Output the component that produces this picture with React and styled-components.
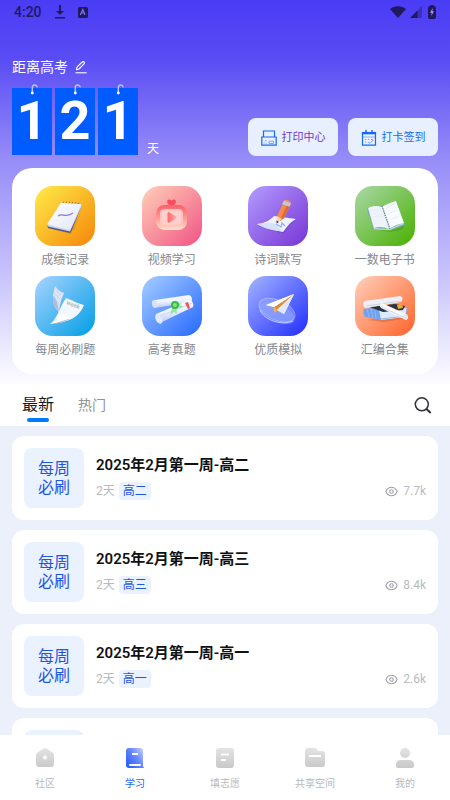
import React, { useState } from "react";
import styled, { createGlobalStyle } from "styled-components";

const GlobalStyle = createGlobalStyle`
  *, *::before, *::after { box-sizing: border-box; }
  body {
    margin: 0;
    font-family: Roboto, "Noto Sans CJK SC", sans-serif;
    background: #fff;
  }
  button { font: inherit; border: 0; padding: 0; background: none; cursor: pointer; }
  a { color: inherit; text-decoration: none; }
  h1, h2, p, ul { margin: 0; padding: 0; }
  ul { list-style: none; }
  svg { display: block; flex: none; }
`;

const Page = styled.div`
  display: flex;
  flex-direction: column;
  height: 100vh;
  overflow: hidden;
`;

const Hero = styled.header`
  flex: none;
  padding: 0 12px 10px;
  background: linear-gradient(#4a3cf4 0, #5a4df4 60px, #978df8 160px, #c6c0fb 270px, #f6f5ff 370px, #fcfcff 100%);
`;

const StatusBar = styled.div`
  display: flex;
  align-items: center;
  justify-content: space-between;
  height: 24px;
  margin-right: 2px;
  color: #21195f;
`;

const StatusGroup = styled.div`
  display: flex;
  align-items: center;
  gap: ${(p) => p.$gap}px;
  padding-left: 2px;
`;

const Clock = styled.time`
  font-size: 14px;
  font-weight: 500;
  line-height: 24px;
`;

const Heading = styled.div`
  display: flex;
  align-items: center;
  gap: 7px;
  padding-top: 32px;
  color: #fff;
`;

const HeroTitle = styled.h1`
  font-size: 14px;
  font-weight: 400;
  line-height: 22px;
`;

const IconButton = styled.button`
  display: flex;
  color: inherit;
`;

const CountRow = styled.div`
  display: flex;
  align-items: flex-end;
  justify-content: space-between;
  padding-top: 10px;
`;

const Countdown = styled.div`
  display: flex;
  align-items: flex-end;
  gap: 3px;
  padding-bottom: 1px;
  color: #fff;
`;

const Digit = styled.div`
  position: relative;
  width: 40px;
  height: 67px;
  background: #005cff;
  font-size: 54px;
  font-weight: 700;
  line-height: 66px;
  text-align: center;

  svg {
    position: absolute;
    top: -4px;
    left: 17px;
  }
`;

const Unit = styled.span`
  padding-left: 6px;
  font-size: 12px;
  line-height: 12px;
`;

const Actions = styled.div`
  display: flex;
  gap: 10px;
`;

const ActionButton = styled.button`
  display: flex;
  align-items: center;
  justify-content: center;
  gap: 5px;
  width: 90px;
  height: 38px;
  padding-top: 2px;
  border-radius: 8px;
  background: #e8f0ff;
  color: ${(p) => p.$color};
  font-size: 11px;
  line-height: 16px;
`;

const Shortcuts = styled.nav`
  display: grid;
  grid-template-columns: repeat(4, 1fr);
  row-gap: 5px;
  margin-top: 12px;
  padding: 18px 0 13px;
  border-radius: 20px;
  background: #fff;
`;

const Shortcut = styled.a`
  display: flex;
  flex-direction: column;
  align-items: center;
  gap: 3px;
  color: #85878e;
  font-size: 12px;
  line-height: 22px;
`;

const Tile = styled.span`
  width: 60px;
  height: 60px;
  border-radius: 18px;
  background: linear-gradient(135deg, ${(p) => p.$from}, ${(p) => p.$to});
`;

const TabBar = styled.div`
  display: flex;
  flex: none;
  align-items: center;
  justify-content: space-between;
  height: 42px;
  padding: 0 18px 0 22px;
`;

const Tabs = styled.div`
  display: flex;
  gap: 24px;
`;

const Tab = styled.button`
  position: relative;
  height: 40px;
  color: ${(p) => (p.$active ? "#18191c" : "#91939a")};
  font-size: ${(p) => (p.$active ? 16 : 14)}px;
  line-height: 40px;

  &::after {
    content: "";
    position: absolute;
    left: 50%;
    bottom: 3px;
    width: 22px;
    height: 4px;
    margin-left: -11px;
    border-radius: 2px;
    background: ${(p) => (p.$active ? "#007bff" : "transparent")};
  }
`;

const Feed = styled.main`
  flex: 1;
  min-height: 0;
  overflow-y: auto;
  scrollbar-width: none;
  padding: 10px 12px;
  background: #ebf0fa;
`;

const FeedList = styled.ul`
  display: flex;
  flex-direction: column;
  gap: 10px;
`;

const Card = styled.a`
  display: flex;
  gap: 12px;
  padding: 12px;
  border-radius: 12px;
  background: #fff;
`;

const Cover = styled.span`
  display: flex;
  flex: none;
  align-items: center;
  justify-content: center;
  width: 60px;
  height: 60px;
  border-radius: 8px;
  background: #ebf2ff;
  color: #1d55e5;
  font-size: 16px;
  line-height: 19px;
  text-align: center;
  white-space: pre-line;
`;

const CardBody = styled.div`
  flex: 1;
  min-width: 0;
  padding-top: 5px;
`;

const CardTitle = styled.h2`
  color: #101113;
  font-size: 15px;
  font-weight: 600;
  line-height: 24px;
`;

const Meta = styled.div`
  display: flex;
  align-items: center;
  gap: 4px;
  margin-top: 5px;
  color: #b9bac0;
  font-size: 12px;
  line-height: 18px;
`;

const Tag = styled.span`
  padding: 0 4px;
  border-radius: 4px;
  background: #ebf2ff;
  color: #1d55e5;
`;

const Views = styled.span`
  display: flex;
  align-items: center;
  gap: 5px;
  margin-left: auto;
`;

const BottomNav = styled.nav`
  display: grid;
  flex: none;
  grid-template-columns: repeat(5, 1fr);
  height: 65px;
  background: #fff;
`;

const NavItem = styled.a`
  display: flex;
  flex-direction: column;
  align-items: center;
  gap: 7px;
  padding-top: 12px;
  color: ${(p) => (p.$active ? "#2468f5" : "#b8b9bd")};
  font-size: 10px;
  line-height: 16px;
`;

const DownloadIcon = () => (
  <svg width="10" height="14" viewBox="0 0 10 14" fill="currentColor" aria-hidden="true">
    <path d="M4 0h2v6h3L5 10 1 6h3zM0 12h10v1.5H0z" />
  </svg>
);

const KeyboardIcon = () => (
  <svg width="10" height="11" viewBox="0 0 10 11" aria-hidden="true">
    <rect width="10" height="11" rx="1.5" fill="currentColor" />
    <path d="M2.3 8 4.8 2.5 7 8M3.2 6h3" fill="none" stroke="#8077e6" strokeWidth="1.1" />
  </svg>
);

const WifiIcon = () => (
  <svg width="16" height="12" viewBox="0 0 16 12" fill="currentColor" aria-hidden="true">
    <path d="M0 3C4.5-.8 11.5-.8 16 3L8 12z" />
  </svg>
);

const SignalIcon = () => (
  <svg width="12" height="12" viewBox="0 0 12 12" fill="currentColor" aria-hidden="true">
    <path d="M12 0v12H0z" opacity=".4" />
    <path d="M7.5 4.5V12H0z" />
  </svg>
);

const BatteryIcon = () => (
  <svg width="8" height="14" viewBox="0 0 8 14" aria-hidden="true">
    <path d="M2.3 1V0h3.4v1C7 1 8 1.7 8 3v9c0 1.2-.8 2-2 2H2c-1.2 0-2-.8-2-2V3c0-1.3 1-2 2.3-2" fill="currentColor" />
    <path d="M4.7 3 2 7.7h1.6L3.3 11 6 6.3H4.4z" fill="#9c94f0" />
  </svg>
);

const PencilIcon = () => (
  <svg width="12" height="13" viewBox="0 0 12 13" fill="none" stroke="currentColor" strokeWidth="1.1" strokeLinejoin="round" aria-hidden="true">
    <path d="m1.5 8.800.5-2.600L7.200 1c.6-.6 1.300-.5 1.800 0s.6 1.200 0 1.800L4 8z" />
    <path d="M.5 11.8h11.2" />
  </svg>
);

const HookIcon = () => (
  <svg width="10" height="11" viewBox="0 0 10 11" fill="none" stroke="#b9bff2" strokeWidth="1.5" strokeLinecap="round" aria-hidden="true">
    <path d="M3.3 8.500V4c0-2 .8-3 2.300-3 1.300 0 2 .7 2.500 1.800" />
    <circle cx="3.300" cy="9" r=".7" fill="#fff" stroke="#fff" />
  </svg>
);

const PrinterIcon = () => (
  <svg width="16" height="16" viewBox="0 0 16 16" fill="none" stroke="#1768f5" aria-hidden="true">
    <path d="M2.500 7V1h11v6" strokeWidth="1.2" />
    <path d="M.8 7h14.4v8.200H.8z" strokeWidth="1.2" />
    <path d="M4 10.500h1.500M8 13.500v-2.300h4.500v2.300z" stroke="#6c9ff7" strokeWidth=".9" />
    <path d="M2.500 13h3.500" stroke="#8fb6fa" strokeWidth=".8" />
  </svg>
);

const CalendarIcon = () => (
  <svg width="16" height="16" viewBox="0 0 16 16" fill="none" stroke="#1768f5" aria-hidden="true">
    <path d="M1.500 2.500h13v12.700h-13z" strokeWidth="1.2" />
    <path d="M1.500 3.300h13" strokeWidth="2" />
    <path d="M5 0v4M11 0v4" strokeWidth="1.5" />
    <path d="M2 7h12" stroke="#75a5f8" strokeWidth=".8" />
    <path d="M4 9.500h1.300M7 9.500h1.300M10 9.500h2M4 12h1.300M7 12l2 1.300 3.500-3.500" stroke="#6c9ff7" strokeWidth=".9" />
  </svg>
);

const SearchIcon = () => (
  <svg width="18" height="18" viewBox="0 0 18 18" fill="none" stroke="#303136" strokeWidth="1.5" aria-hidden="true">
    <circle cx="7.800" cy="8.300" r="6.500" />
    <path d="m12 12.500 4.700 4.500" strokeWidth="2" />
  </svg>
);

const EyeIcon = () => (
  <svg width="13" height="11" viewBox="0 0 14 12" fill="none" stroke="#9fa0a9" strokeWidth="1.2" aria-hidden="true">
    <path d="M.8 6C2 3.200 4.200 1.300 7 1.300S12 3.200 13.200 6C12 8.800 9.800 10.700 7 10.700S2 8.800.8 6Z" />
    <circle cx="7" cy="6" r="1.900" />
  </svg>
);

const Art = ({ children }) => (
  <svg width="60" height="60" viewBox="0 0 60 60" aria-hidden="true">{children}</svg>
);

const NotepadArt = () => (
  <Art>
    <defs>
      <linearGradient id="pad" x1="0" y1="0" x2="1" y2="1">
        <stop stopColor="#fff" /><stop offset="1" stopColor="#e1e7f7" />
      </linearGradient>
    </defs>
    <path d="m13 42 23 6 12-27-9 23z" fill="#bd6d08" opacity=".35" />
    <path d="m12 38 1 4 22 5 2-3 10-25-2-1z" fill="#4d5683" />
    <path d="m12 38 .8 2.500L35 45.500 47 19.500 46 18z" fill="#c9d3ee" />
    <path d="m26 16.500 20.500 1.700L35 44 12 38.200z" fill="url(#pad)" />
    <path d="M23 30c5-4 6 3 15-3" fill="none" stroke="#8a78e4" strokeWidth="1.2" />
    <path d="m28 17 .7-1.500m2.300 1.700.7-1.500m2.300 1.700.7-1.500m2.300 1.700.7-1.500m2.300 1.700.7-1.500m2.300 1.700.7-1.500" stroke="#78653c" strokeWidth=".8" />
  </Art>
);

const VideoArt = () => (
  <Art>
    <defs>
      <linearGradient id="tv" x2="0" y2="1">
        <stop stopColor="#fb5f68" /><stop offset=".55" stopColor="#ff9c96" /><stop offset="1" stopColor="#ffe0cc" />
      </linearGradient>
      <linearGradient id="play"><stop stopColor="#ff6870" /><stop offset="1" stopColor="#ffaca4" /></linearGradient>
    </defs>
    <path d="M29.500 20.500c-2-1.400-4.300-2.700-4.300-4.800 0-3 3.400-2.800 4.300-.8 1-2 4.400-2.200 4.400.8 0 2.100-2.300 3.400-4.400 4.800" fill="#f94b5b" />
    <rect x="14" y="19" width="31" height="25" rx="8.500" fill="url(#tv)" />
    <rect x="18" y="23" width="23" height="17" rx="4.500" fill="#ffc3c1" />
    <rect x="20" y="24.500" width="19" height="14" rx="3" fill="#ffd0cb" />
    <path d="M25.500 27.500c0-1.200 1-1.600 2-1l6.500 4c1 .7 1 1.500 0 2.100l-6.500 4c-1 .6-2 .1-2-1z" fill="url(#play)" />
  </Art>
);

const WritingArt = () => (
  <Art>
    <path d="M9 39c10-1 14-5 17-8l22 3c-7 5-8 9-12 14-8-3-16-3-27-9" fill="#5d32bb" opacity=".3" />
    <path d="M9 38c9-1 13-4 17-8l22 3c-7 4-9 8-13 13-8-2-16-2-26-8" fill="#edf2ff" />
    <path d="M9 38c9-.5 14-2 18 0l8 8c-8-2-16-2-26-8" fill="#cedbfa" opacity=".8" />
    <path d="m28 38 5 3 1-4 3 3" fill="none" stroke="#92aef2" strokeWidth="1.2" />
    <path d="m29 30 6-13 7 3-6 12-4 3z" fill="#f58a4c" />
    <path d="m33 32 6-13 3 1-6 12-4 3z" fill="#d9683c" />
    <path d="m34 18 2-3.500 7 2.800-1.500 3.500z" fill="#c3cad1" />
    <path d="M36 14.500c2-1.500 7 0 7 2.800z" fill="#ff9254" />
    <path d="m29 30 5 3-5 4z" fill="#ffd093" /><path d="m28.500 34.500.2 3 2-1.500z" fill="#24242b" />
  </Art>
);

const BookArt = () => (
  <Art>
    <path d="m14 42 21 3 15-6-3 5-12 2z" fill="#328d14" opacity=".35" />
    <path d="m12 23 2-2 5 21 15 1 14-6 2 2-15 5-16-.5z" fill="#7ba2d6" />
    <path d="m13 22 6 20 15 1 14-6 1 1-14 6-16-.5z" fill="#c1d5f3" />
    <path d="M13 22c6-3 10-2 14-1l7 22c-5-2-10-3-15-1z" fill="#eff3fb" />
    <path d="M27 21c3-2 7-4 14-6l8 22c-6 1-10 3-15 6z" fill="#f8fbff" />
    <path d="m27 20 8 23" stroke="#617fae" strokeWidth="1.2" strokeDasharray="1.5 .8" />
    <path d="M16 25c4-2 7-1 10 0M18 31c4-2 7-1 10 0M31 22l9-4M33 28l9-4M35 34l9-4" stroke="#d8e2ef" strokeWidth=".5" fill="none" />
  </Art>
);

const PaperArt = () => (
  <Art>
    <path d="M20 10c4 5 6 6 9 7-2 5-4 10-5 19-6-5-6-11-6-17z" fill="#dce4fb" />
    <path d="M18 20c3 1 5 8 6 16-6-4-6-10-6-16" fill="#aebdd9" />
    <path d="m21 15 5 4m-6-1 5 5m-6-1 5 5" stroke="#bac6e6" strokeWidth=".6" />
    <path d="M31 22c6 2 10 5 18 7-5 12-13 17-34 19 8-6 10-18 16-26" fill="#f3f6fd" />
    <path d="M15 48c10-9 10-3 20-5-6 3-12 5-20 5" fill="#b4becf" />
    <path d="M15 48c8-5 10-8 13-10 3 0 4 3 7 4-6 3-12 4-20 6" fill="#fff" />
    <text x="31" y="28" fill="#a9bdca" fontFamily="Roboto, sans-serif" fontSize="6" fontWeight="700" transform="rotate(22 31 28)">week</text>
  </Art>
);

const ScrollsArt = () => (
  <Art>
    <defs><linearGradient id="scroll" x2=".2" y2="1"><stop stopColor="#fff" /><stop offset=".55" stopColor="#edf2ff" /><stop offset="1" stopColor="#b7c9f4" /></linearGradient></defs>
    <path d="m13 24 34-5c3 1 4 5 2 7l-36 6c-3-1-4-6 0-8" fill="url(#scroll)" />
    <ellipse cx="12.500" cy="28" rx="2.500" ry="4" transform="rotate(-12 12.500 28)" fill="#d7e2fb" />
    <path d="M14 38 47 24c4 0 5 5 4 7L20 46c-5 4-8-4-6-8" fill="url(#scroll)" />
    <path d="m18 40 32-13" stroke="#cad7f6" strokeWidth="1" />
    <ellipse cx="17" cy="43" rx="3" ry="5" transform="rotate(-25 17 43)" fill="#e1e9fd" />
    <path d="m43 27 3-1 2 6-2 1z" fill="#f4534f" />
    <path d="m31 29-3 10 4-3 3 2-1-10zM36 26l5 5-3 1-4-3z" fill="#95e5ad" />
    <circle cx="33" cy="29" r="4" fill="#36bb48" /><circle cx="33" cy="29" r="2" fill="#8be36f" />
  </Art>
);

const PlaneArt = () => (
  <Art>
    <ellipse cx="29" cy="37" rx="19" ry="9" transform="rotate(23 29 37)" fill="#7998ff" opacity=".6" />
    <ellipse cx="29" cy="34" rx="19" ry="10" transform="rotate(23 29 34)" fill="#a3b3ff" opacity=".45" stroke="#e0e5ff" strokeWidth="1" />
    <path d="M12 34c4 10 21 16 33 11" stroke="#d3dcff" strokeWidth="1" fill="none" opacity=".8" />
    <path d="m18 29 28-11-10 20-7-4-3 2v-5z" fill="#f5f8ff" />
    <path d="m26 31 20-13-17 16-2 3z" fill="#dd8b35" />
    <path d="m27 31 2 3-2 3-2-5z" fill="#f2aa4d" />
    <path d="m29 34 17-16-10 20z" fill="#e2e9ff" />
    <path d="m18 29 28-11-20 13z" fill="#fff" />
  </Art>
);

const CollectionArt = () => (
  <Art>
    <path d="m12 44 17 2 23-4-3-4z" fill="#a94023" opacity=".3" />
    <path d="M9 33c8-2 12 0 19 2l-1 9-17-3c-2-3-2-6-1-8" fill="#6fa3f2" />
    <path d="m12 33 2 8m2-8 2 9m2-8 1 9" stroke="#94bdf7" strokeWidth=".8" />
    <path d="m24 34 28-2-2 9-24 3z" fill="#dceaff" />
    <path d="m26 43 25-3 1-8" stroke="#7da8e4" strokeWidth=".8" fill="none" />
    <path d="m14 31 26-3 10 2-2 4-20 2z" fill="#273341" />
    <path d="m42 29 5-1 1 4-5 1z" fill="#efa731" />
    <path d="m10 25 35-5c3 1 3 4 1 6l-35 6c-3-1-4-5-1-7" fill="#edf0f6" />
    <path d="m11 30 35-5" stroke="#cdd3df" strokeWidth="1" />
    <path d="m27 27 24 11c3 2 2 5 0 6L26 32c-2-2-1-5 1-5" fill="#f7f8fb" />
    <path d="m27 31 23 11" stroke="#d3d8e3" strokeWidth="1" />
    <circle cx="50.500" cy="41" r="2.500" fill="#e2e6ee" />
  </Art>
);

const NavGradients = () => (
  <defs>
    <linearGradient id="grayNav" gradientUnits="userSpaceOnUse" x1="0" y1="0" x2="0" y2="22">
      <stop stopColor="#e5e5e5" /><stop offset="1" stopColor="#c7c7c7" />
    </linearGradient>
    <linearGradient id="blueNav" x1="1" y1="0" x2="0" y2=".8">
      <stop stopColor="#cfd7ff" /><stop offset=".5" stopColor="#6887ff" /><stop offset="1" stopColor="#285ff7" />
    </linearGradient>
  </defs>
);

const NavDrawing = ({ name }) => (
  <svg width="22" height="22" viewBox="0 0 22 22" aria-hidden="true">
    <NavGradients />
    {name === "home" && (
      <><path d="M9.500 1.500q1.500-1 3 0l6 4q1.500 1 1.500 2.500v9q0 3-3 3H5q-3 0-3-3V8q0-1.500 1.500-2.500z" fill="url(#grayNav)" /><circle cx="11" cy="10.500" r="2" fill="#fff" /></>
    )}
    {name === "book" && (
      <><path d="M5 1h11q3 0 3 3v15l1 2H5q-3 0-3-3V4q0-3 3-3" fill="url(#blueNav)" /><path d="M8 7h6" stroke="#fff" strokeWidth="2" /><rect x="5" y="17" width="12" height="2" rx="1" fill="#fff" /></>
    )}
    {name === "form" && (
      <><rect x="2" y="1" width="18" height="20" rx="3" fill="url(#grayNav)" /><path d="M7 7.500h8M7 13h5" stroke="#fff" strokeWidth="2" /></>
    )}
    {name === "folder" && (
      <><path d="M4 1h7q1.500 0 2.200 1.500L14 4h4q3 0 3 3v10q0 3-3 3H4q-3 0-3-3V4q0-3 3-3" fill="url(#grayNav)" /><path d="M5 9h12" stroke="#fff" strokeWidth="2" /></>
    )}
    {name === "person" && (
      <><circle cx="11" cy="6" r="5" fill="url(#grayNav)" /><path d="M7 13h8q5 0 5 5v1q0 2-2 2H4q-2 0-2-2v-1q0-5 5-5" fill="url(#grayNav)" /></>
    )}
  </svg>
);

const shortcuts = [
  { label: "成绩记录", from: "#ffec4a", to: "#f58608", Drawing: NotepadArt },
  { label: "视频学习", from: "#ffd0b8", to: "#f15384", Drawing: VideoArt },
  { label: "诗词默写", from: "#b39cff", to: "#7734d4", Drawing: WritingArt },
  { label: "一数电子书", from: "#aad8a8", to: "#48b000", Drawing: BookArt },
  { label: "每周必刷题", from: "#a8d4ff", to: "#009de5", Drawing: PaperArt },
  { label: "高考真题", from: "#a7ceff", to: "#2568ff", Drawing: ScrollsArt },
  { label: "优质模拟", from: "#a4b5ff", to: "#202cff", Drawing: PlaneArt },
  { label: "汇编合集", from: "#ffd0bb", to: "#ff6228", Drawing: CollectionArt },
];

const posts = [
  { grade: "高二", views: "7.7k" },
  { grade: "高三", views: "8.4k" },
  { grade: "高一", views: "2.6k" },
];

const navItems = [
  { label: "社区", icon: "home" },
  { label: "学习", icon: "book" },
  { label: "填志愿", icon: "form" },
  { label: "共享空间", icon: "folder" },
  { label: "我的", icon: "person" },
];

export default function App() {
  const [activeTab, setActiveTab] = useState("最新");
  return (
    <>
      <GlobalStyle />
      <Page>
        <Hero>
          <StatusBar>
            <StatusGroup $gap={13}><Clock>4:20</Clock><DownloadIcon /><KeyboardIcon /></StatusGroup>
            <StatusGroup $gap={4}><WifiIcon /><SignalIcon /><StatusGroup $gap={0}><BatteryIcon /></StatusGroup></StatusGroup>
          </StatusBar>
          <Heading>
            <HeroTitle>距离高考</HeroTitle>
            <IconButton type="button" aria-label="编辑"><PencilIcon /></IconButton>
          </Heading>
          <CountRow>
            <Countdown>
              {["1", "2", "1"].map((digit, i) => <Digit key={i}><HookIcon />{digit}</Digit>)}
              <Unit>天</Unit>
            </Countdown>
            <Actions>
              <ActionButton type="button" $color="#7137c8"><PrinterIcon />打印中心</ActionButton>
              <ActionButton type="button" $color="#1768f5"><CalendarIcon />打卡签到</ActionButton>
            </Actions>
          </CountRow>
          <Shortcuts>
            {shortcuts.map(({ label, from, to, Drawing }) => (
              <Shortcut href="#" key={label}><Tile $from={from} $to={to}><Drawing /></Tile>{label}</Shortcut>
            ))}
          </Shortcuts>
        </Hero>
        <TabBar>
          <Tabs role="tablist">
            {["最新", "热门"].map((tab) => (
              <Tab key={tab} type="button" role="tab" aria-selected={tab === activeTab} $active={tab === activeTab} onClick={() => setActiveTab(tab)}>{tab}</Tab>
            ))}
          </Tabs>
          <IconButton type="button" aria-label="搜索"><SearchIcon /></IconButton>
        </TabBar>
        <Feed>
          <FeedList>
            {posts.map(({ grade, views }) => (
              <li key={grade}>
                <Card href="#">
                  <Cover>{"每周\n必刷"}</Cover>
                  <CardBody>
                    <CardTitle>2025年2月第一周-{grade}</CardTitle>
                    <Meta><span>2天</span><Tag>{grade}</Tag><Views><EyeIcon />{views}</Views></Meta>
                  </CardBody>
                </Card>
              </li>
            ))}
            <li aria-hidden="true"><Card as="div"><Cover /></Card></li>
          </FeedList>
        </Feed>
        <BottomNav>
          {navItems.map(({ label, icon }) => (
            <NavItem key={label} href="#" $active={icon === "book"} aria-current={icon === "book" ? "page" : undefined}><NavDrawing name={icon} />{label}</NavItem>
          ))}
        </BottomNav>
      </Page>
    </>
  );
}
